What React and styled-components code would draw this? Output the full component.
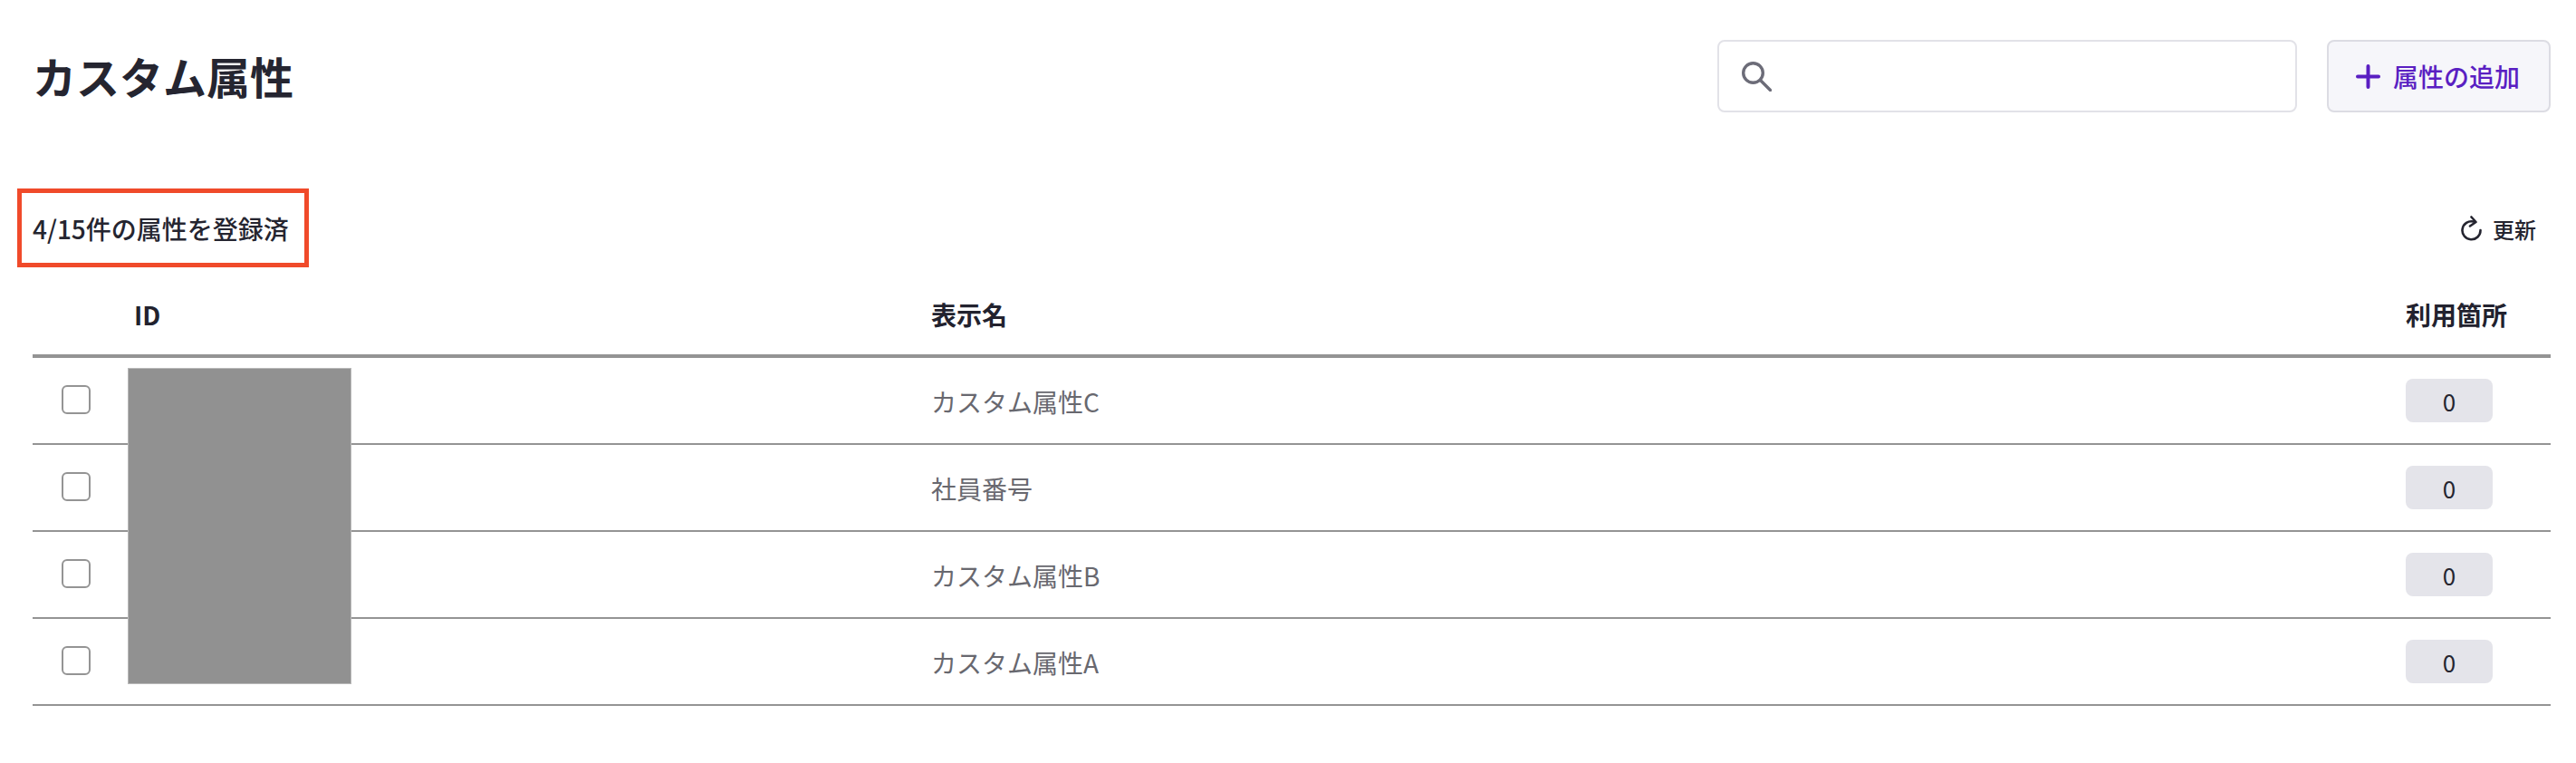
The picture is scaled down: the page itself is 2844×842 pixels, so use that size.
import React from "react";
import styled, { createGlobalStyle } from "styled-components";

const Global = createGlobalStyle`
  html, body { margin: 0; padding: 0; background: #fff; }
  body { font-family: "Noto Sans CJK JP", "Noto Sans", sans-serif; color: #22222e; }
`;

const Page = styled.main`
  padding: 44px 28px 0 36px;
  width: 2844px;
  box-sizing: border-box;
`;

const TopBar = styled.header`
  display: flex;
  align-items: center;
  justify-content: space-between;
  height: 80px;
`;

const Title = styled.h1`
  margin: 0;
  padding-bottom: 3px;
  font-size: 48px;
  line-height: 72px;
  font-weight: 700;
  color: #252530;
`;

const Actions = styled.div`
  display: flex;
  gap: 33px;
`;

const SearchBox = styled.label`
  display: flex;
  align-items: center;
  gap: 16px;
  width: 640px;
  height: 80px;
  box-sizing: border-box;
  padding: 0 25px;
  background: #fff;
  border: 2px solid #e2e2e8;
  border-radius: 8px;
  color: #6c6c78;
`;

const SearchInput = styled.input`
  flex: 1;
  min-width: 0;
  border: 0;
  outline: 0;
  background: transparent;
  font: inherit;
`;

const AddButton = styled.button`
  display: flex;
  align-items: center;
  gap: 14px;
  width: 247px;
  height: 80px;
  box-sizing: border-box;
  padding: 0 30px;
  background: #f6f6fa;
  border: 2px solid #dcdce3;
  border-radius: 8px;
  color: #5a1fc2;
  font-family: inherit;
  font-size: 28px;
  font-weight: 500;
  white-space: nowrap;
`;

const SummaryBar = styled.div`
  display: flex;
  align-items: center;
  justify-content: space-between;
  height: 60px;
  margin-top: 98px;
`;

const Summary = styled.p`
  position: relative;
  margin: 0;
  font-size: 28px;
  line-height: 40px;
  font-weight: 500;
  color: #252530;

  &::after {
    content: "";
    position: absolute;
    left: -17px;
    right: -22px;
    top: -24px;
    bottom: -23px;
    border: 5px solid #f04a2a;
  }
`;

const RefreshButton = styled.button`
  display: flex;
  align-items: center;
  gap: 12px;
  margin-right: 16px;
  padding: 0;
  border: 0;
  background: transparent;
  color: #252530;
  font-family: inherit;
  font-size: 24px;
  font-weight: 500;
`;

const TableWrap = styled.section`
  position: relative;
  margin-top: 39px;
`;

const Row = styled.div`
  display: grid;
  grid-template-columns: 112px 880px 1fr 160px;
  align-items: center;
  box-sizing: border-box;
  height: ${(p) => (p.$head ? "74px" : "96px")};
  border-bottom: ${(p) => (p.$head ? 4 : 2)}px solid #949494;
`;

const HeadCell = styled.div`
  font-size: 28px;
  line-height: 40px;
  font-weight: 700;
  color: #22222e;
  padding-bottom: 18px;
`;

const CheckCell = styled.div`
  display: flex;
  padding-left: 32px;
  padding-bottom: 2px;
`;

const Check = styled.input.attrs({ type: "checkbox" })`
  appearance: none;
  width: 32px;
  height: 32px;
  margin: 0;
  background: #fff;
  border: 2px solid #949494;
  border-radius: 6px;
`;

const NameCell = styled.div`
  font-size: 28px;
  line-height: 40px;
  color: #68686f;
  padding-top: 2px;
`;

const CountBadge = styled.div`
  display: flex;
  align-items: center;
  justify-content: center;
  width: 96px;
  height: 48px;
  border-radius: 8px;
  background: #e4e4ea;
  color: #252530;
  font-size: 26px;
`;

const Redaction = styled.div`
  position: absolute;
  left: 105px;
  top: 85px;
  width: 247px;
  height: 349px;
  box-sizing: border-box;
  background: #919191;
  border: 1px solid #b9b9b9;
`;

const SearchIcon = () => (
  <svg width="33" height="33" viewBox="0 0 33 33" fill="none" stroke="currentColor" strokeWidth="3.4" strokeLinecap="round">
    <circle cx="12.5" cy="12.5" r="10.8" />
    <path d="M20.5 20.5 L31.5 31.5" />
  </svg>
);

const PlusIcon = () => (
  <svg width="27" height="27" viewBox="0 0 27 27" fill="none" stroke="currentColor" strokeWidth="4" strokeLinecap="round">
    <path d="M13.5 2 V25 M2 13.5 H25" />
  </svg>
);

const RefreshIcon = () => (
  <svg width="23" height="28" viewBox="0 0 23 28" fill="none" stroke="currentColor" strokeWidth="2.6" strokeLinecap="round" strokeLinejoin="round">
    <path d="M14 6.6 A10 10 0 1 0 21.5 16" />
    <path d="M11.5 1.5 L16.5 7 L10 11.5" />
  </svg>
);

const rows = ["カスタム属性C", "社員番号", "カスタム属性B", "カスタム属性A"];

export default function App() {
  return (
    <Page>
      <Global />
      <TopBar>
        <Title>カスタム属性</Title>
        <Actions>
          <SearchBox>
            <SearchIcon />
            <SearchInput aria-label="検索" />
          </SearchBox>
          <AddButton>
            <PlusIcon />
            属性の追加
          </AddButton>
        </Actions>
      </TopBar>
      <SummaryBar>
        <Summary>4/15件の属性を登録済</Summary>
        <RefreshButton>
          <RefreshIcon />
          更新
        </RefreshButton>
      </SummaryBar>
      <TableWrap>
        <Row $head>
          <div />
          <HeadCell>ID</HeadCell>
          <HeadCell>表示名</HeadCell>
          <HeadCell>利用箇所</HeadCell>
        </Row>
        {rows.map((name) => (
          <Row key={name}>
            <CheckCell><Check /></CheckCell>
            <div />
            <NameCell>{name}</NameCell>
            <CountBadge>0</CountBadge>
          </Row>
        ))}
        <Redaction />
      </TableWrap>
    </Page>
  );
}
